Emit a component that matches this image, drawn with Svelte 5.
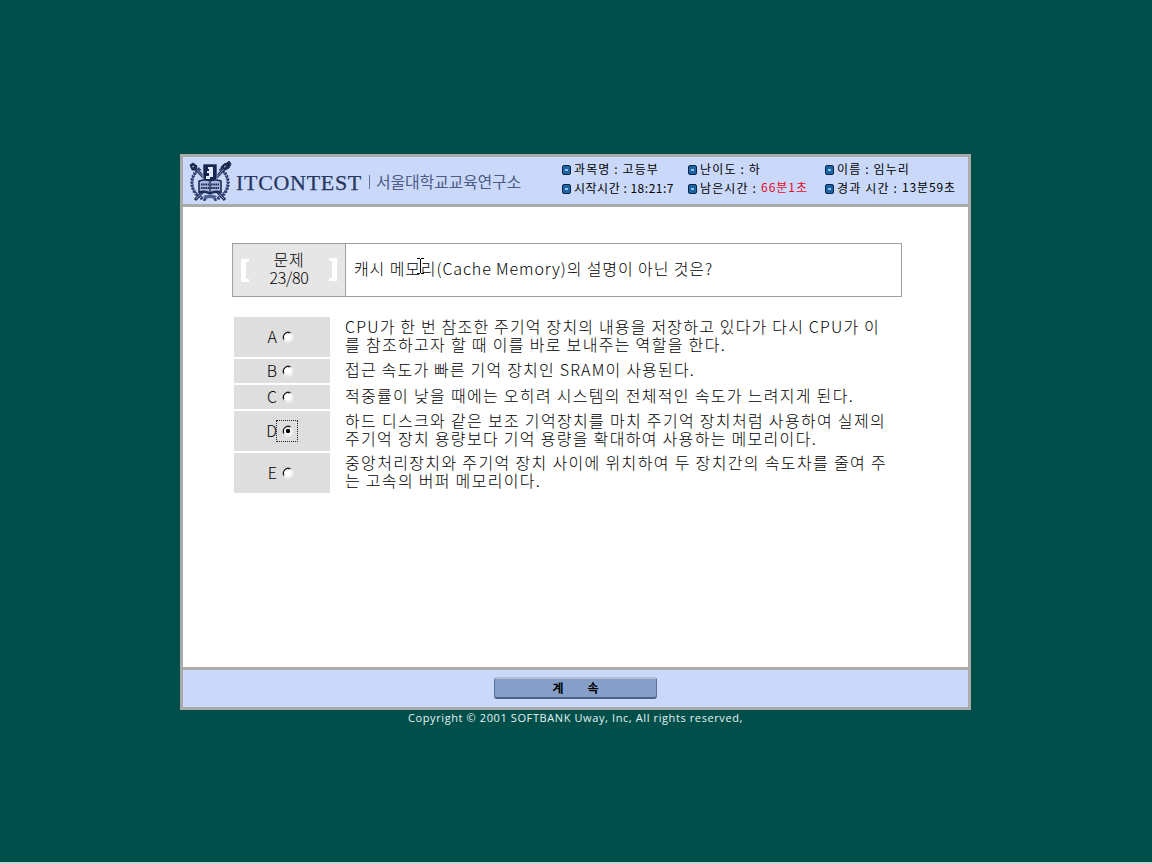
<script>
  const info = [
    [
      { label: '과목명 : 고등부', w: 85 },
      { label: '시작시간 : 18:21:7', w: 100 }
    ],
    [
      { label: '난이도 : 하', w: 61 },
      { label: '남은시간 :', w: 57, value: '66분1초', vw: 47, hot: true }
    ],
    [
      { label: '이름 : 임누리', w: 73 },
      { label: '경과 시간 :', w: 61, value: '13분59초', vw: 54 }
    ]
  ];

  const options = [
    { key: 'A', lines: [['CPU가 한 번 참조한 주기억 장치의 내용을 저장하고 있다가 다시 CPU가 이', 535], ['를 참조하고자 할 때 이를 바로 보내주는 역할을 한다.', 381]] },
    { key: 'B', lines: [['접근 속도가 빠른 기억 장치인 SRAM이 사용된다.', 350]] },
    { key: 'C', lines: [['적중률이 낮을 때에는 오히려 시스템의 전체적인 속도가 느려지게 된다.', 509]] },
    { key: 'D', lines: [['하드 디스크와 같은 보조 기억장치를 마치 주기억 장치처럼 사용하여 실제의', 541], ['주기억 장치 용량보다 기억 용량을 확대하여 사용하는 메모리이다.', 472]] },
    { key: 'E', lines: [['중앙처리장치와 주기억 장치 사이에 위치하여 두 장치간의 속도차를 줄여 주', 542], ['는 고속의 버퍼 메모리이다.', 196]] }
  ];

  let selected = $state('D');

  const leaves = Array.from({ length: 13 }, (_, i) => {
    const a = ((-48 + i * 10.5) * Math.PI) / 180;
    return { x: 18 * Math.cos(a), y: 17 * Math.sin(a), r: (a * 180) / Math.PI };
  });

  // Spreads the letters so that a line takes the given width.
  function fit(node, width) {
    const natural = node.getBoundingClientRect().width;
    const count = [...node.textContent].length;
    node.style.letterSpacing = (width - natural) / count + 'px';
  }
</script>

<main>
  <section class="window">
    <header>
      <svg class="crest" width="44" height="42" viewBox="-22 -21 44 42">
        {#each [1, -1] as side}
          <g transform="scale({side} 1)">
            {#each leaves as l}
              <g transform="translate({l.x} {l.y + 1}) rotate({l.r})">
                <ellipse cx="1.4" cy="-.6" rx="1.8" ry="1" transform="rotate(-50)" fill="#273766" />
                <ellipse cx="-1.5" cy="-.6" rx="1.8" ry=".9" transform="rotate(50)" fill="#34467a" />
              </g>
            {/each}
          </g>
        {/each}
        <path d="M-16-15 15 18M16-15-15 18" stroke="#25335d" stroke-width="3.2" />
        <path d="M-15-14 14 17M15-14-14 17" stroke="#a6b4da" stroke-width=".8" />
        <path d="M-20-17l3-2 4 3-1 4-4 0zM11-15l3-3 3-1 2-2 2 3-2 4-4 2z" fill="#1d294f" stroke="#1d294f" stroke-width="1" />
        <path d="M-18-15l2-1M14-15l2-1" stroke="#b6c3e6" stroke-width="1" />
        <path d="M-7-18H7V-4L5-1H-5L-7-4z" fill="#172550" stroke="#cad9f9" stroke-width=".6" />
        <path d="M-2-15H3V-5H0V-3H-4V-6H-1V-9H-3V-11H-1V-13H-2z" fill="#e2e9ff" />
        <path d="M-11-1Q-5-3 0-1Q5-3 11-1V10Q5 8 0 11Q-5 8-11 10z" fill="#a9b7df" stroke="#1e2b55" stroke-width="1.6" />
        <path d="M-9 2.5h8M1 2.5h8M-9 6h8M1 6h8" stroke="#1e2b55" stroke-width="2.2" stroke-dasharray="1.6 .6" />
        <path d="M-11 11Q-5 9 0 12Q5 9 11 11M0 0V11" stroke="#1e2b55" stroke-width="1.4" fill="none" />
        <path d="M-7 14Q0 11 7 14L4 17Q0 15-4 17z" fill="#50618f" />
      </svg>
      <div class="brand"><span use:fit={126}>ITCONTEST</span></div>
      <i class="bar"></i>
      <div class="org"><span use:fit={145}>서울대학교교육연구소</span></div>
      <div class="info">
        {#each info as column}
          <div class="column">
            {#each column as item}
              <div class="item">
                <svg width="9" height="10" viewBox="0 0 9 10">
                  <rect x=".5" y=".5" width="8" height="9" rx="1.5" fill="#1d64a4" stroke="#0a2445" />
                  <rect x="3" y="4" width="3" height="2" fill="#8fc4e6" />
                </svg>
                <span class="label" use:fit={item.w}>{item.label}</span>
                {#if item.value}<span class="value" class:hot={item.hot} use:fit={item.vw}>{item.value}</span>{/if}
              </div>
            {/each}
          </div>
        {/each}
      </div>
    </header>

    <div class="body">
      <div class="question">
        <div class="number">
          <svg width="9" height="23" viewBox="0 0 9 23"><path d="M0 0H8V3H5V20H8V23H0z" fill="#fff" /></svg>
          <div class="count"><div><span use:fit={31}>문제</span></div><div><span use:fit={39}>23/80</span></div></div>
          <svg class="close" width="9" height="23" viewBox="0 0 9 23"><path d="M9 0H1V3H4V20H1V23H9z" fill="#fff" /></svg>
        </div>
        <div class="text">
          <span use:fit={359}>캐시 메모리(Cache Memory)의 설명이 아닌 것은?</span>
          <svg class="caret" width="7" height="16" viewBox="0 0 7 16"><path d="M0 .5H3M4 .5H7M3.5 1V15M0 15.5H3M4 15.5H7" stroke="#000" fill="none" /></svg>
        </div>
      </div>

      <div class="options">
        {#each options as o}
          <div class="option" class:tall={o.lines.length > 1}>
            <label class="pick">
              <span class="key">{o.key}</span>
              <input type="radio" name="answer" value={o.key} bind:group={selected} />
              <span class="ring" class:focus={selected === o.key}>
                <svg width="12" height="12" viewBox="0 0 12 12">
                  <circle cx="6" cy="6" r="5.5" fill="#fff" />
                  <path d="M2.2 9.8A5.4 5.4 0 0 1 9.8 2.2" fill="none" stroke="#8a8a8a" stroke-width=".9" />
                  <path d="M2 8.2A4.6 4.6 0 0 1 8.2 2" fill="none" stroke="#111" stroke-width="1.1" />
                  <path d="M2.8 9.6A4.9 4.9 0 0 0 9.6 2.8" fill="none" stroke="#d2d2d2" stroke-width=".7" />
                  {#if selected === o.key}<circle cx="6" cy="6" r="2.2" fill="#000" />{/if}
                </svg>
              </span>
            </label>
            <div class="answer">
              {#each o.lines as [line, w]}<div><span use:fit={w}>{line}</span></div>{/each}
            </div>
          </div>
        {/each}
      </div>
    </div>

    <footer><button><span>계</span><span>속</span></button></footer>
  </section>
  <div class="copyright"><span use:fit={335}>Copyright © 2001 SOFTBANK Uway, Inc, All rights reserved,</span></div>
</main>

<style>
  :global(body) { background: #004f4b; }
  * { box-sizing: border-box; }
  main {
    height: 864px;
    padding: 154px 181px 0 180px;
    border-bottom: 2px solid #c5d5d3;
    font-family: "Noto Sans CJK KR", sans-serif;
    font-weight: 300;
    color: #000;
    white-space: nowrap;
    overflow: hidden;
  }
  .window { height: 556px; border: 3px solid #aaa; display: flex; flex-direction: column; background: #fff; }
  header { height: 50px; background: #cad9f9; border-bottom: 3px solid #aaa; display: flex; align-items: center; padding-left: 5px; }
  .crest { flex: none; margin-top: 2px; }
  .brand { width: 126px; margin: 4px 0 0 4px; font: 400 22px/30px "Liberation Serif", serif; color: #26365f; -webkit-text-stroke: .25px #26365f; }
  .bar { width: 1px; height: 14px; margin: 3px 6px 0 7px; background: #67739b; }
  .org { width: 147px; margin-top: 1px; font-size: 16px; line-height: 24px; font-weight: 400; color: #4c5a85; }
  .info { display: grid; grid-template-columns: 126px 137px 140px; margin-left: 39px; height: 47px; font-size: 12px; }
  .column { padding-top: 3px; }
  .item { height: 19px; line-height: 18px; display: flex; align-items: center; font-weight: 400; }
  .label { margin: -2px 0 0 3px; flex: none; }
  .value { margin: -4px 0 0 4px; flex: none; }
  .hot { color: #e10b28; }

  .body { flex: 1; padding: 36px 66px 0 49px; }
  .question { height: 54px; border: 1px solid #a0a0a0; display: flex; }
  .number { width: 113px; background: #e6e6e6; border-right: 1px solid #a0a0a0; display: flex; justify-content: space-between; align-items: center; padding: 0 8px; }
  .close { margin-top: -2px; }
  .count { text-align: center; font-size: 16px; line-height: 18px; margin-top: -5px; }
  .count div { height: 18px; }
  .count span, .answer span { display: inline-block; line-height: 18px; height: 18px; vertical-align: top; }
  .text { position: relative; padding-left: 8px; line-height: 49px; font-size: 16px; }
  .caret { position: absolute; left: 71px; top: 14px; }

  .options { margin: 20px 0 0 2px; display: flex; flex-direction: column; gap: 2px; }
  .option { height: 24px; display: flex; align-items: center; }
  .option.tall { height: 40px; }
  .pick { width: 96px; height: 100%; background: #dedede; display: flex; align-items: center; padding-left: 31px; }
  .pick input { position: absolute; opacity: 0; width: 0; height: 0; margin: 0; }
  .key { width: 12px; display: flex; justify-content: flex-end; font-size: 16px; line-height: 18px; margin-top: -3px; }
  .ring { width: 22px; height: 22px; margin-left: -1px; padding-left: 1px; display: flex; align-items: center; justify-content: center; border: 1px dotted transparent; }
  .ring.focus { border-color: #222; }
  .answer { padding-left: 15px; font-size: 16px; line-height: 18px; margin-top: -4px; }
  .answer div { height: 18px; }

  footer { height: 40px; border-top: 3px solid #aaa; background: #cad9f9; display: flex; justify-content: center; padding-top: 7px; }
  button { width: 163px; height: 22px; padding: 0 0 1px 0; display: flex; align-items: center; justify-content: center; gap: 24px; background: #869fc8; border: 1px solid #58719b; border-top: 2px solid #b0bfd8; border-bottom: 2px solid #4b6286; border-radius: 3px; font: 700 12px/16px "Noto Sans CJK KR", sans-serif; color: #000; }
  .copyright { padding-left: 228px; font: 400 11px/16px "Open Sans", sans-serif; color: #e8f2f2; }
</style>
